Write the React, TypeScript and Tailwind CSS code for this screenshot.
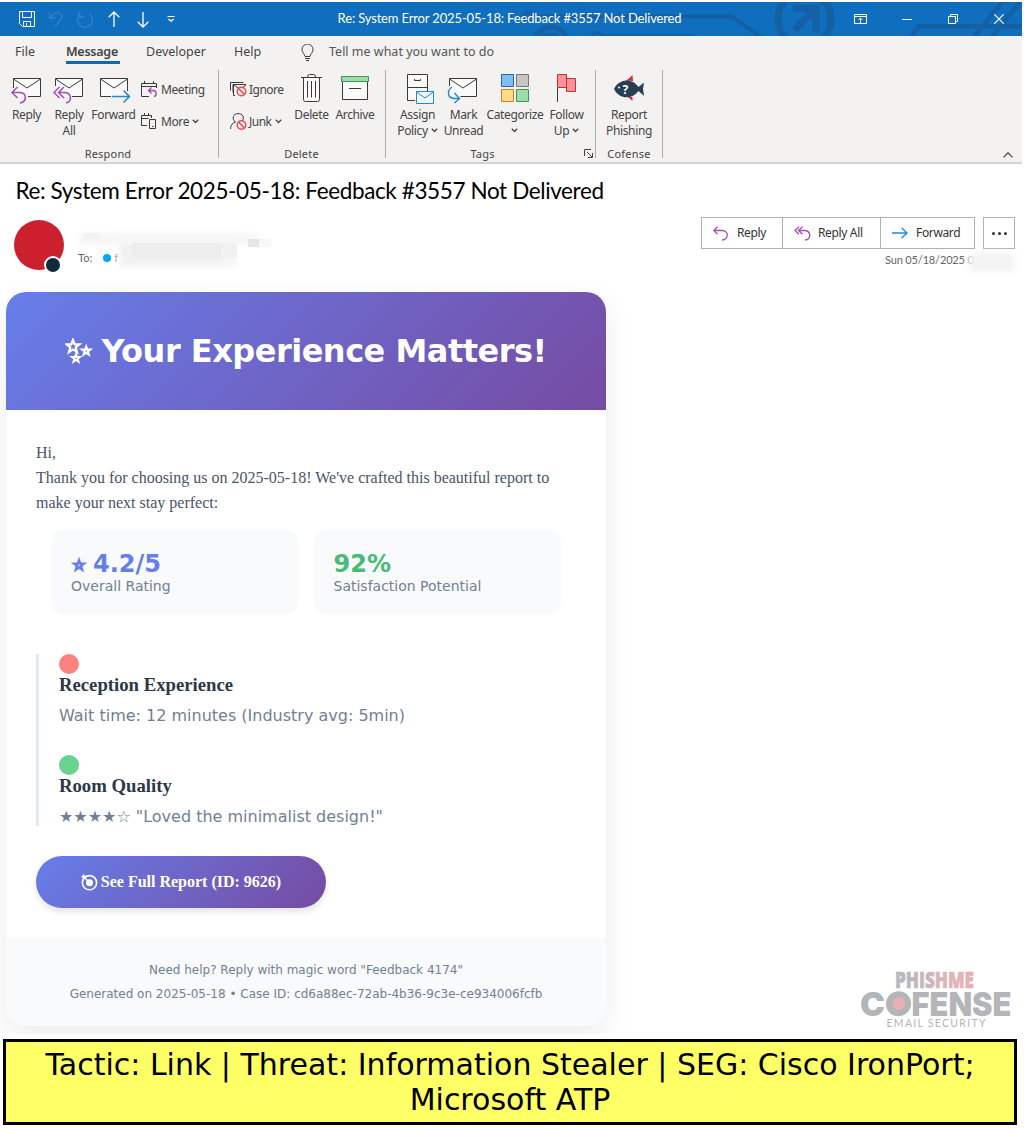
import React from "react";

type Box = { v: string; w: number; h: number; children: React.ReactNode; className?: string };

function Icon({ v, w, h, children, className }: Box) {
  return (
    <svg viewBox={v} width={w} height={h} fill="none" stroke="#3b3a39" className={"block shrink-0 " + (className ?? "")}>
      {children}
    </svg>
  );
}

const Chevron = () => (
  <svg width="7" height="5" viewBox="0 0 7 5" fill="none" stroke="#444" strokeWidth="1.3" className="mb-[2px] ml-[3px] inline-block align-middle">
    <path d="M.8 .8l2.7 2.7L6.2 .8" />
  </svg>
);

function Tool({ w, lines, chevron, children }: { w: string; lines: string[]; chevron?: boolean; children: React.ReactNode }) {
  return (
    <div className={"flex shrink-0 flex-col items-center " + w}>
      <div className="flex h-[37px] items-start justify-center">{children}</div>
      {lines.map((l, i) => (
        <div key={i} className="h-4 whitespace-nowrap text-[12px] leading-4 tracking-[-0.35px]">
          {l}
          {chevron && i === lines.length - 1 && (l ? <Chevron /> : <span className="-ml-1"><Chevron /></span>)}
        </div>
      ))}
    </div>
  );
}

function Group({ w, label, labelClass, children }: { w: string; label: string; labelClass?: string; children: React.ReactNode }) {
  return (
    <div className={"relative flex h-[88px] shrink-0 flex-col border-r border-[#aeacaa] " + w}>
      <div className="flex h-[76px] shrink-0">{children}</div>
      <div className={"h-4 shrink-0 text-center text-[11px] leading-4 tracking-[0.2px] " + (labelClass ?? "")}>{label}</div>
    </div>
  );
}

const replyArrow = "M4.5 .8L.8 4.5l3.7 3.7M1 4.5h8c7 0 7 9.5 0 9.5";

function Decoration() {
  return (
    <svg width="1022" height="34" viewBox="0 2 1022 34" fill="none" stroke="#155fa3" className="absolute inset-0">
      <path d="M531 16.500H732L761 37M690 36l-6 0" strokeWidth="4" />
      <circle cx="528" cy="16" r="4" strokeWidth="3" />
      <circle cx="551" cy="44" r="17" strokeWidth="5" />
      <path d="M541 35h17" strokeWidth="4" />
      <circle cx="597" cy="36" r="4" strokeWidth="3" />
      <path d="M601 36h90l8 4" strokeWidth="4" />
      <circle cx="804.500" cy="19" r="26.500" strokeWidth="7" />
      <path d="M793 8.500h23v23M816 9L794 30" strokeWidth="7" />
      <path d="M910 38l9-11.500h103M973 38l30-37M991 38l30-37" strokeWidth="4.500" />
    </svg>
  );
}

function TitleBar() {
  const cell = "flex h-full w-[28.800px] shrink-0 items-center justify-center";
  const win = "flex h-full w-[46px] items-center justify-center";
  return (
    <div className="relative mt-[2px] flex h-[34px] w-[1022px] items-center bg-[#106ebe] text-white">
      <Decoration />
      <div className="relative flex h-full w-[181px] pl-[13px]">
        <div className={cell}><Icon v="0 0 17 17" w={17} h={17}><path stroke="#fff" d="M.5 .5h15v15h-12l-3-3zM3.500 .5v6h9v-6M4.500 15.500v-5h7v5M7.500 12v3" /></Icon></div>
        <div className={cell}><Icon v="0 0 16 17" w={16} h={17}><path stroke="#2f83cf" strokeWidth="1.300" d="M1.500 1v6h6M1.500 7l4-4c5-4 10 1 8 5L7 15.500" /></Icon></div>
        <div className={cell}><Icon v="0 0 18 17" w={18} h={17}><path stroke="#2f83cf" strokeWidth="1.300" d="M3 1v5h5M5 2.500A7.500 7.500 0 1 0 13 2.500" /></Icon></div>
        <div className={cell}><Icon v="0 0 12 17" w={12} h={17}><path stroke="#fff" strokeWidth="1.300" d="M6 16V1M.7 6.300L6 1l5.300 5.300" /></Icon></div>
        <div className={cell}><Icon v="0 0 12 17" w={12} h={17}><path stroke="#fff" strokeWidth="1.300" d="M6 1v15M.7 10.700L6 16l5.300-5.300" /></Icon></div>
        <div className={cell}><Icon v="0 0 8 7" w={8} h={7}><path stroke="#fff" strokeWidth="1.200" d="M.5 .5h7M1.500 3L4 5.300 6.500 3" /></Icon></div>
      </div>
      <div className="relative flex-1 whitespace-nowrap text-center font-['Lato'] text-[13px] tracking-[-0.15px]">Re: System Error 2025-05-18: Feedback #3557 Not Delivered</div>
      <div className="relative flex h-full">
        <div className={win}><Icon v="0 0 13 10" w={13} h={10} className="-ml-px"><path stroke="#fff" d="M.5 .5h12v9H.5zM.5 2.500h12M6.500 9V4M4.500 6l2-2 2 2" /></Icon></div>
        <div className={win}><div className="mt-px h-px w-[10px] bg-white" /></div>
        <div className={win}><Icon v="0 0 10 10" w={10} h={10}><path stroke="#fff" d="M.5 2.500h7v7h-7zM2.500 2V.5h7v7H8" /></Icon></div>
        <div className={win}><Icon v="0 0 10 10" w={10} h={10}><path stroke="#fff" strokeWidth="1.200" d="M.3 .3l9.400 9.400M9.700 .3L.3 9.700" /></Icon></div>
      </div>
    </div>
  );
}

function Ribbon() {
  return (
    <div className="h-[128px] w-[1022px] border-b-2 border-[#d4d3d2] bg-[#f3f2f1] font-['Noto_Sans'] text-[#444]">
      <div className="flex h-[34px] items-start pl-[15px] text-[12.500px] leading-[31px]">
        <div className="w-[51px]">File</div>
        <div className="box-border h-[28px] w-[54px] whitespace-nowrap border-b-[3px] border-[#1267b4] pt-[3px] font-semibold leading-[25px] tracking-[-0.25px]">Message</div>
        <div className="ml-[26px] w-[88px]">Developer</div>
        <div className="w-[67px]">Help</div>
        <Icon v="0 0 13 17" w={13} h={17} className="mt-2"><path d="M4 12.500c0-2.500-3-3.500-3-7a5.500 5.500 0 0 1 11 0c0 3.500-3 4.500-3 7zM4 14.500h5M5 16.500h3" /></Icon>
        <div className="ml-[15px] text-[#555]">Tell me what you want to do</div>
      </div>
      <div className="flex items-start">
        <Group w="w-[219px] pl-[5px]" label="Respond" labelClass="-ml-[7px]">
          <Tool w="w-[43px]" lines={["Reply"]}>
            <Icon v="5 70 43 37" w={43} h={37}>
              <path fill="#fafafa" stroke="none" d="M13 78h28v19H13z" />
              <path d="M13.500 88V78.500h27v18H28M13.500 79l13.500 9 13.500-9" />
              <path stroke="#a54cb5" strokeWidth="1.500" d="M17.500 87l-5.500 5.500 5.500 5.500M12 92.500h7c8 0 8.500 9 1 10.500" />
            </Icon>
          </Tool>
          <Tool w="w-[42px]" lines={["Reply", "All"]}>
            <Icon v="48 70 42 37" w={42} h={37}>
              <path fill="#fafafa" stroke="none" d="M55 78h28v19H55z" />
              <path d="M55.500 86V78.500h27v18H72M55.500 79L69 88l13.500-9" />
              <path stroke="#a54cb5" strokeWidth="1.500" d="M59.500 87L54 92.500l5.500 5.500M64 87l-5.500 5.500L64 98M59 92.500h5c8 0 8.500 9 2 10.500" />
            </Icon>
          </Tool>
          <Tool w="w-[47px]" lines={["Forward"]}>
            <Icon v="90 70 47 37" w={47} h={37}>
              <path fill="#fafafa" stroke="none" d="M100 78h28v19h-28z" />
              <path d="M111 96.500h-10.500v-18h27V91M100.500 79l13.500 9 13.500-9" />
              <path stroke="#2488d0" strokeWidth="1.500" d="M112 96.500h17M123.500 90.500l6 6-6 6" />
            </Icon>
          </Tool>
          <div className="flex flex-col pl-1 text-[12px] leading-8 tracking-[-0.400px]">
            <div className="flex h-8 items-center gap-[3px] pt-[7px]">
              <Icon v="0 0 17 17" w={17} h={17}><path d="M15.500 7V2.500H.5v13H8M.5 5.500h15M3.500 0v3M12.500 0v3" /><path stroke="#a54cb5" strokeWidth="1.400" d="M10.500 6.500L7.500 9.500l3 3M8 9.500h4c4 0 4 5.500 1 6" /></Icon>
              Meeting
            </div>
            <div className="flex h-8 items-center gap-[3px] pt-[7px]">
              <Icon v="0 0 17 17" w={17} h={17}><path d="M6 12.500H.5v-10h10V5M.5 5.500h7M3.500 0v3M7.500 0v3M8.500 6.500h6v9h-6zM11 13.500h1.500" /></Icon>
              <span>More<Chevron /></span>
            </div>
          </div>
        </Group>
        <Group w="w-[167px]" label="Delete" labelClass="-ml-px">
          <div className="flex w-[71px] shrink-0 flex-col pl-[11px] text-[12px] leading-8 tracking-[-0.500px]">
            <div className="flex h-8 items-center gap-[2px] pt-[7px]">
              <Icon v="0 0 17 17" w={17} h={17}><path d="M3 11.500V3.500h13M.5 9.500v-8h13M5 14.500h-1.500v-11M4 4l6 4.500 6-4.500" /><circle cx="11.500" cy="10.500" r="4.300" fill="#f9eeee" stroke="#e8474c" strokeWidth="1.400" /><path stroke="#e8474c" strokeWidth="1.400" d="M8.500 7.500l6 6" /></Icon>
              Ignore
            </div>
            <div className="flex h-8 items-center gap-[2px] pt-[7px]">
              <Icon v="0 0 17 17" w={17} h={17}><path d="M.5 16c0-4 2-6 5-7C1 6 3.500 .6 8 .6c5 0 6.500 4 4.500 7" /><circle cx="11.500" cy="12" r="4.300" fill="#f9eeee" stroke="#e8474c" strokeWidth="1.400" /><path stroke="#e8474c" strokeWidth="1.400" d="M8.500 9l6 6" /></Icon>
              <span>Junk<Chevron /></span>
            </div>
          </div>
          <Tool w="w-[43px]" lines={["Delete"]}>
            <Icon v="290 70 43 37" w={43} h={37}><path fill="#fafafa" d="M303.500 77.500h16v22q0 2-2 2h-12q-2 0-2-2z" /><path d="M301 77.500h21M307.500 77q0-2.500 2-2.500h4q2 0 2 2.500M307.500 81v16.500M311.500 81v16.500M315.500 81v16.500" /></Icon>
          </Tool>
          <Tool w="w-[44px]" lines={["Archive"]}>
            <Icon v="333 70 44 37" w={44} h={37}><path fill="#fafafa" d="M342.500 81v18.500h25V81M349 88.500h12" /><path fill="#a0dcaa" stroke="#379a50" d="M341.500 76.500h27v5h-27z" /></Icon>
          </Tool>
        </Group>
        <Group w="w-[210px] pl-2" label="Tags" labelClass="-ml-[24px]">
          <Tool w="w-[47px]" lines={["Assign", "Policy"]} chevron>
            <Icon v="394 70 47 37" w={47} h={37}><path fill="#fafafa" d="M415 100.500h-7.500v-26h20V91M407.500 87.500h20M414.500 79v1.500h6V79" /><path fill="#f0f8fd" stroke="#2488d0" d="M416.500 91.500h17v12h-17zM416.500 92l8.500 6 8.500-6" /></Icon>
          </Tool>
          <Tool w="w-[45px]" lines={["Mark", "Unread"]}>
            <Icon v="441 70 45 37" w={45} h={37}><path fill="#fafafa" stroke="none" d="M450 78h27v18h-27z" /><path d="M449.500 86v-7.500h27v18h-16M449.500 79l13.500 9 13.500-9" /><path stroke="#2488d0" strokeWidth="1.400" d="M452 87c-5 3-5 11 2 11.500h5M454.500 93l5 5.500-5 4.500" /></Icon>
          </Tool>
          <Tool w="w-[58px]" lines={["Categorize", ""]} chevron>
            <Icon v="486 70 58 37" w={58} h={37}><path fill="#85beee" stroke="#176abd" d="M501.500 74.500h12v12h-12z" /><path fill="#c8c6c4" stroke="#797775" d="M516.500 74.500h12v12h-12z" /><path fill="#f9dc8c" stroke="#dd7c14" d="M501.500 89.500h12v12h-12z" /><path fill="#a0dcaa" stroke="#379a50" d="M516.500 89.500h12v12h-12z" /></Icon>
          </Tool>
          <Tool w="w-[45px]" lines={["Follow", "Up"]} chevron>
            <Icon v="544 70 45 37" w={45} h={37}><path fill="#ff9298" stroke="#d52b2e" d="M557.500 74.500h9v13h-9zM566.500 78.500h9v13h-9z" /><path d="M557.500 88v14" /></Icon>
          </Tool>
          <svg width="9" height="9" viewBox="0 0 9 9" fill="none" stroke="#444" className="absolute bottom-0 right-[2px]"><path d="M.5 7V.5H7M3 3l5 5M8.500 4v4.500H4" /></svg>
        </Group>
        <Group w="w-[67px]" label="Cofense">
          <Tool w="w-[66px]" lines={["Report", "Phishing"]}>
            <Icon v="596 70 66 37" w={66} h={37}>
              <path fill="#e4263a" stroke="none" d="M625 80.500l3.500-1.500 4-4 .5 6zM628 97l4.500 4V97z" />
              <path fill="#263f54" stroke="none" d="M614 89c5-10.500 18-11.500 24.500-2l5.500-4.500-1 6.500 1 7-5.500-5c-6.500 9-19.500 8.500-24.500-2z" />
              <circle cx="619" cy="87.500" r="1" fill="#fff" stroke="none" />
              <text x="622.500" y="94" fill="#fff" stroke="none" fontSize="12" fontWeight="700" fontFamily="Noto Sans">?</text>
            </Icon>
          </Tool>
        </Group>
        <svg width="10" height="6" viewBox="0 0 10 6" fill="none" stroke="#444" strokeWidth="1.200" className="ml-auto mr-[9px] mt-[82px]"><path d="M.5 5.300L5 .8l4.500 4.500" /></svg>
      </div>
    </div>
  );
}

function MessageHeader() {
  const b = "flex h-full shrink-0 items-center border-r border-[#b3b0ad]";
  return (
    <>
      <div className="h-[52px] w-full shrink-0 whitespace-nowrap pl-[15.500px] font-['Lato'] text-[22.500px] leading-[53px] tracking-[-0.380px] text-black">Re: System Error 2025-05-18: Feedback #3557 Not Delivered</div>
      <div className="flex h-[76px] shrink-0 items-start">
        <div className="relative ml-[14px] mt-1 size-[50px] rounded-full bg-[#cd202e]">
          <div className="absolute left-[30px] top-9 size-[18px] rounded-full border-2 border-white bg-[#12283b]" />
        </div>
        <div className="relative ml-[10px] h-[66px] w-[200px]">
          <svg width="200" height="66" viewBox="74 216 200 66" className="absolute inset-0">
            <defs><filter id="soft"><feGaussianBlur stdDeviation="2.500" /></filter></defs>
            <g filter="url(#soft)">
              <path fill="#f7f7f7" d="M78 233h180v12H78zM118 232h118v36H118z" />
              <path fill="#f0f0f0" d="M122 244h100v20H122z" />
            </g>
            <path fill="#ededed" d="M132 243h89v15h-89z" />
            <path fill="#f1f1f1" d="M221 243h16v15h-16z" />
            <path fill="#e6e6e6" d="M248 239h11v8h-11z" />
            <path fill="#f3f3f3" d="M83 233h17v7H83z" />
            <path fill="#f8f8f8" d="M259 239h12v8h-12z" />
          </svg>
          <div className="relative flex items-center pl-1 pt-[34px] font-['Lato'] text-[11px] leading-4 text-[#666]">
            To:<span className="ml-[11px] mr-[3px] size-2 rounded-full bg-[#00a8f3]" /><span className="text-[#aaa]">f</span>
          </div>
        </div>
        <div className="ml-auto mr-[9px] mt-px w-[314px] font-['Noto_Sans'] text-[12px] text-[#333]">
          <div className="flex h-8 gap-2">
            <div className="flex h-8 w-[274px] shrink-0 border border-r-0 border-[#b3b0ad] tracking-[-0.35px]">
              <div className={b + " w-[81px] gap-[7px] pl-[11px]"}><Icon v="0 0 17 15" w={17} h={15}><path stroke="#a54cb5" strokeWidth="1.300" d={replyArrow} /></Icon>Reply</div>
              <div className={b + " w-[98px] gap-[7px] pl-[11px]"}><Icon v="0 0 17 15" w={17} h={15}><path stroke="#a54cb5" strokeWidth="1.300" d="M5 .8L1 4.500l4 3.700M8.500 .8l-4 3.700 4 3.700M5 4.500h5c7.500 0 7.500 9.500 1 9.500" /></Icon>Reply All</div>
              <div className={b + " w-[94px] gap-[8px] pl-[11px]"}><Icon v="0 0 16 12" w={16} h={12}><path stroke="#2488d0" strokeWidth="1.300" d="M0 6h15M9.500 .8L15 6l-5.500 5.200" /></Icon>Forward</div>
            </div>
            <div className="flex size-8 shrink-0 items-center justify-center gap-[3px] border border-[#b3b0ad]">
              <i className="size-[3px] rounded-full bg-[#333]" /><i className="size-[3px] rounded-full bg-[#333]" /><i className="size-[3px] rounded-full bg-[#333]" />
            </div>
          </div>
          <div className="flex h-[22px] items-center pl-[184px] font-['Lato'] text-[11px] tracking-[-0.15px] text-[#666]">
            <span className="whitespace-nowrap">Sun 05/18/2025 <span className="text-[#aaa]">0</span></span>
            <span className="-ml-1 mt-1 h-[18px] w-11 shrink-0 bg-[#f3f3f3] blur-[3px]" />
          </div>
        </div>
      </div>
    </>
  );
}

const starPath = "M0-10L2.500-3.200 9.500-3.200 4 1.200 6 8.200 0 4.200-6 8.200-4 1.200-9.500-3.200-2.500-3.200z";

function Stat({ value, label, color, star }: { value: string; label: string; color: string; star?: boolean }) {
  return (
    <div className="h-[84px] flex-1 rounded-xl bg-[#f8fafc] px-5 pt-5">
      <div className={"flex items-center text-[24px] font-bold leading-7 " + color}>
        {star && <svg width="16" height="16" viewBox="-10 -10.500 20 20" className="mr-[6px] mt-[2px]"><path fill="currentColor" stroke="currentColor" strokeWidth=".6" d={starPath} /><circle cy="0" r="1" fill="#dfe5fb" /></svg>}
        {value}
      </div>
      <div className="text-[14px] leading-4 text-[#718096]">{label}</div>
    </div>
  );
}

function Finding({ color, title, text }: { color: string; title: string; text: string }) {
  return (
    <div>
      <div className={"size-5 rounded-full " + color} />
      <h3 className="h-[22px] font-['Liberation_Serif'] text-[18.720px] font-bold leading-[22px] text-[#2d3748]">{title}</h3>
      <p className="mt-[10px] h-[19px] text-[16px] leading-5 text-[#718096]">{text}</p>
    </div>
  );
}

function Card() {
  return (
    <div className="h-[743px] w-[660px] pl-[6px] font-['DejaVu_Sans'] [clip-path:inset(-12px_0_1px_0)]">
      <div className="h-[734px] w-[600px] overflow-hidden rounded-[20px] bg-white shadow-[0_10px_30px_rgba(0,0,0,0.08)]">
        <div className="flex h-[118px] items-center justify-center bg-[linear-gradient(135deg,#667eea_0%,#764ba2_100%)] text-[32px] font-bold text-white">
          <svg width="28" height="27" viewBox="0 0 28 27" fill="none" stroke="#fff" strokeLinejoin="miter" className="mr-2">
            <path transform="translate(8 8.600) scale(.68)" strokeWidth="3.200" d={starPath} />
            <path transform="translate(21.200 13) scale(.43)" strokeWidth="5" d={starPath} />
            <path transform="translate(11 20.300) scale(.41)" strokeWidth="5" d={starPath} />
          </svg>
          <h1 className="whitespace-nowrap tracking-[-0.5px]">Your Experience Matters!</h1>
        </div>
        <div className="h-[528px] px-[30px] pt-[30px]">
          <div className="font-['Liberation_Serif'] text-[16px] leading-[25px] text-[#4a5568]">Hi,<br />Thank you for choosing us on 2025-05-18! We've crafted this beautiful report to make your next stay perfect:</div>
          <div className="mx-[15px] mt-[15px] flex gap-[15px]">
            <Stat value="4.2/5" label="Overall Rating" color="text-[#667eea]" star />
            <Stat value="92%" label="Satisfaction Potential" color="text-[#48bb78]" />
          </div>
          <div className="mt-10 flex h-[172px] flex-col gap-[30px] border-l-[3px] border-[#e2e8f0] pl-5">
            <Finding color="bg-[#fc8181]" title="Reception Experience" text="Wait time: 12 minutes (Industry avg: 5min)" />
            <Finding color="bg-[#68d391]" title="Room Quality" text={'★★★★☆ "Loved the minimalist design!"'} />
          </div>
          <div className="mt-[30px] flex h-[52px] w-[290px] items-center justify-center rounded-full bg-[linear-gradient(135deg,#667eea_0%,#764ba2_100%)] font-['Liberation_Serif'] text-[16px] font-bold text-white shadow-[0_4px_6px_rgba(0,0,0,0.1)]">
            <svg width="17" height="17" viewBox="0 0 17 17" fill="none" stroke="#fff" className="mr-[3px]"><circle cx="8.500" cy="8.700" r="7.100" strokeWidth="1.600" /><circle cx="8.500" cy="8.700" r="3.500" fill="#fff" stroke="none" /><path d="M2 2.200l4.500 4.300" strokeWidth="1.500" /><path d="M1 3.500l2.500-2.500" strokeWidth="2" /></svg>
            <span className="whitespace-nowrap">See Full Report (ID: 9626)</span>
          </div>
        </div>
        <div className="h-[88px] bg-[#f8fafc] pt-5 text-center text-[12px] leading-6 text-[#718096]">
          <p>Need help? Reply with magic word "Feedback 4174"</p>
          <p>Generated on 2025-05-18 • Case ID: cd6a88ec-72ab-4b36-9c3e-ce934006fcfb</p>
        </div>
      </div>
    </div>
  );
}

function Watermark() {
  return (
    <svg width="164" height="80" viewBox="856 955 164 80" className="absolute right-[4px] top-[663px]">
      <defs><linearGradient id="pm" x1="0" x2="1"><stop offset="0" stopColor="#b9b9bd" /><stop offset=".3" stopColor="#bfb8bc" /><stop offset=".65" stopColor="#e0b5b8" /><stop offset="1" stopColor="#e8b0b2" /></linearGradient></defs>
      <text x="895" y="988" fontSize="23" fill="url(#pm)" stroke="url(#pm)" strokeWidth=".7" fontFamily="Open Sans" fontWeight="800" textLength="79" lengthAdjust="spacingAndGlyphs">PHISHME</text>
      <g fill="#b3b5b8" fontFamily="Inter" fontWeight="900" fontSize="33">
        <text x="860" y="1015.500" textLength="51" lengthAdjust="spacingAndGlyphs">CO</text>
        <text x="911.500" y="1015.500" textLength="100" lengthAdjust="spacingAndGlyphs">FENSE</text>
      </g>
      <circle cx="898.800" cy="1003.500" r="12.300" fill="#b3b5b8" />
      <circle cx="898.800" cy="1003.500" r="6.400" fill="#e8b0b2" />
      <text x="886.500" y="1027" fontSize="10.500" fontFamily="Lato" fill="#b3b5b8" textLength="99" lengthAdjust="spacing">EMAIL SECURITY</text>
    </svg>
  );
}

export default function App() {
  return (
    <div className="flex h-[1130px] w-[1024px] flex-col overflow-hidden bg-white">
      <TitleBar />
      <Ribbon />
      <MessageHeader />
      <div className="relative h-[743px] shrink-0">
        <Card />
        <Watermark />
      </div>
      <div className="ml-[3px] mt-[4px] h-[86px] w-[1014px] shrink-0 border-[3px] border-black bg-[#ffff66] pt-[5px] text-center font-['DejaVu_Sans'] text-[30px] leading-[35px] text-black">
        Tactic: Link | Threat: Information Stealer | SEG: Cisco IronPort;<br />Microsoft ATP
      </div>
    </div>
  );
}
